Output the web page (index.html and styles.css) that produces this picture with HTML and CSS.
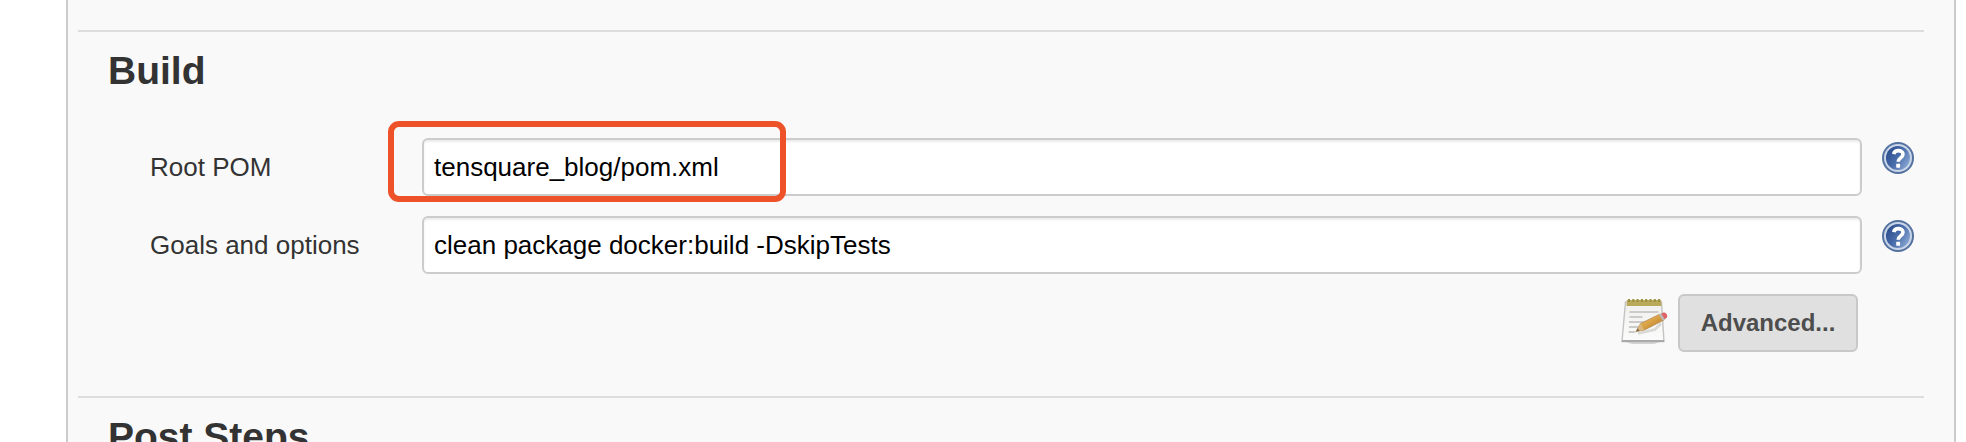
FILE: index.html
```html
<!DOCTYPE html>
<html lang="en">
<head>
<meta charset="utf-8">
<title>Build configuration</title>
<link rel="stylesheet" href="styles.css">
</head>
<body>
<svg class="defs" width="0" height="0" aria-hidden="true">
  <defs>
    <linearGradient id="blue" x1="0" y1="0.2" x2="1" y2="0.8">
      <stop offset="0" stop-color="#2b4c8c"/><stop offset="0.5" stop-color="#4a6dab"/><stop offset="1" stop-color="#8eacd6"/>
    </linearGradient>
    <linearGradient id="wood" x1="0" y1="0" x2="1" y2="1">
      <stop offset="0" stop-color="#f0cf80"/><stop offset="0.5" stop-color="#d9a045"/><stop offset="1" stop-color="#a86f28"/>
    </linearGradient>
    <linearGradient id="paper" x1="0" y1="0" x2="0" y2="1">
      <stop offset="0" stop-color="#f0f0ef"/><stop offset="1" stop-color="#fbfbfb"/>
    </linearGradient>
    <symbol id="help" viewBox="0 0 32 32">
      <circle cx="16" cy="16" r="16" fill="#54719f"/>
      <circle cx="16" cy="16" r="14" fill="#c9d6e9"/>
      <circle cx="16" cy="16" r="12" fill="url(#blue)"/>
      <path d="M11.700 12.200C12.200 9.600 14 8.600 16.400 8.600c2.700 0 4.600 1.400 4.600 3.700 0 3.600-4.800 3.600-4.800 7.400" fill="none" stroke="#fff" stroke-width="3.600"/>
      <rect x="14.200" y="21.800" width="3.900" height="3.900" rx="0.600" fill="#fff"/>
    </symbol>
  </defs>
</svg>
<main class="panel">
  <section class="section">
    <h2 class="section-title">Build</h2>
    <div class="row">
      <label class="label" for="pom">Root POM</label>
      <div class="field">
        <input class="input" id="pom" type="text" value="tensquare_blog/pom.xml">
        <span class="highlight"></span>
      </div>
      <svg class="help"><use href="#help"/></svg>
    </div>
    <div class="row">
      <label class="label" for="goals">Goals and options</label>
      <div class="field">
        <input class="input" id="goals" type="text" value="clean package docker:build -DskipTests">
      </div>
      <svg class="help"><use href="#help"/></svg>
    </div>
    <div class="actions">
      <svg class="notepad" viewBox="0 0 48 48">
        <path d="M4 44.500h38l-8 2.500H12z" fill="#d2d2d2"/>
        <path d="M5.500 5h36l2.500 39.500H2z" fill="url(#paper)" stroke="#c4c4c2" stroke-width="1.400"/>
        <path d="M2 44h42" stroke="#aaa" stroke-width="2"/>
        <path d="M7 3h34l.5 6H6.500z" fill="#b8aa58"/>
        <path d="M8 3.500h33" stroke="#9c8f42" stroke-width="3" stroke-dasharray="2 2.300"/>
        <path d="M9.500 15h29M9.500 20h13M9 25h17M9 30h11M8.500 35h7" stroke="#cbcbca" stroke-width="2"/>
        <path d="M18 36.500l17-4 6-6" fill="none" stroke="#d8d8d6" stroke-width="2.500"/>
        <path d="M16 34.500l4.500-8L40 17l4 6L24.500 33z" fill="url(#wood)" stroke="#b0884c" stroke-width="0.700"/>
        <path d="M16 34.500l4.500-8 4 6.500z" fill="#d9b67a"/>
        <path d="M16 34.500l1.800-3.300 1.800 2.700z" fill="#7a6648"/>
        <path d="M38.800 17.600l2.700-1.300 4 6-2.700 1.400z" fill="#b9bab8"/>
        <path d="M41.200 16.500l2.300-1c2.500-.8 5 3.800 3.200 5.200l-2 1.500z" fill="#dc6464"/>
      </svg>
      <button class="button" type="button">Advanced...</button>
    </div>
  </section>
  <section class="section">
    <h2 class="section-title">Post Steps</h2>
  </section>
</main>
</body>
</html>
```
FILE: styles.css
```css
* {
  box-sizing: border-box;
}

body {
  margin: 0;
  height: 442px;
  overflow: hidden;
  background: #fff;
  color: #333;
  font-family: "Liberation Sans", Helvetica, Arial, sans-serif;
  font-size: 26px;
}

.defs {
  display: block;
}

.panel {
  height: 442px;
  margin: 0 10px 0 66px;
  padding: 30px 30px 0 10px;
  overflow: hidden;
  background: #f9f9f9;
  border: solid #ccc;
  border-width: 0 2px;
}

.section {
  height: 366px;
  border-top: 2px solid #ddd;
}

.section-title {
  margin: 0 0 45px;
  padding: 16px 0 0 30px;
  font-size: 39px;
  line-height: 45px;
}

.row {
  display: flex;
  height: 58px;
  margin-bottom: 20px;
  padding-left: 72px;
}

.label {
  width: 272px;
  line-height: 58px;
}

.field {
  position: relative;
  width: 1440px;
}

.input {
  display: block;
  width: 100%;
  height: 58px;
  padding: 0 10px;
  border: 2px solid #ccc;
  border-radius: 6px;
  background: #fff;
  box-shadow: inset 0 2px 2px rgba(0, 0, 0, 0.075);
  color: #000;
  font: inherit;
}

.highlight {
  position: absolute;
  top: -17px;
  left: -34px;
  width: 398px;
  height: 81px;
  border: 6px solid #ee5229;
  border-radius: 11px;
}

.help {
  width: 32px;
  height: 32px;
  margin: 4px 0 0 20px;
}

.actions {
  display: flex;
  justify-content: flex-end;
  gap: 10px;
  padding-right: 66px;
}

.notepad {
  width: 48px;
  height: 48px;
  margin-top: 3px;
}

.button {
  width: 180px;
  height: 58px;
  padding: 0 0 1px;
  border: 2px solid #c8c8c8;
  border-radius: 6px;
  background: #e0e0e0;
  color: #4d4d4d;
  font: bold 24px "Liberation Sans", Helvetica, Arial, sans-serif;
}
```
